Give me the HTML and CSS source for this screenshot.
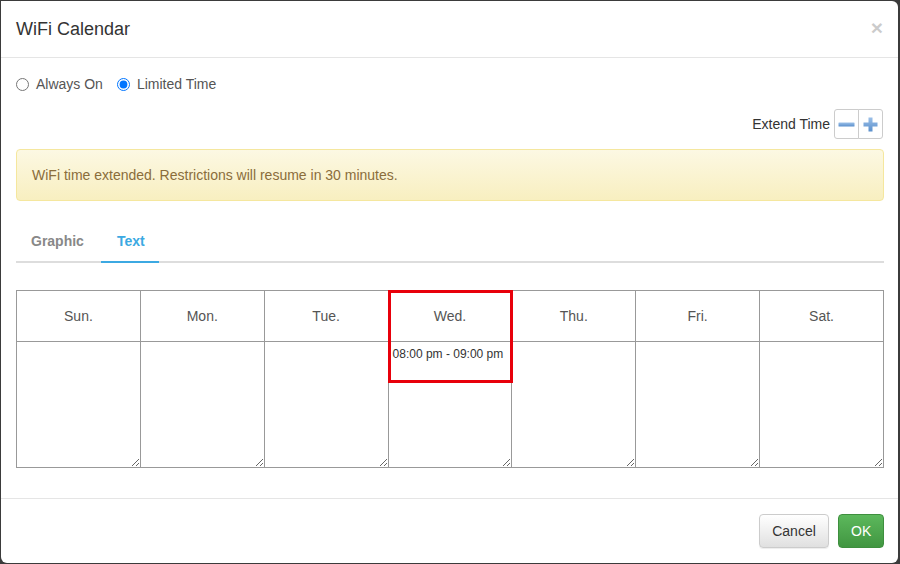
FILE: index.html
```html
<!DOCTYPE html>
<html>
<head>
<meta charset="utf-8">
<title>WiFi Calendar</title>
<link rel="stylesheet" href="styles.css">
</head>
<body>
<div class="modal">
  <div class="modal-header">
    <h4 class="modal-title">WiFi Calendar</h4>
    <span class="close">&times;</span>
  </div>
  <div class="modal-body">
    <div class="radio-row">
      <label class="radio"><input type="radio" name="mode"> Always On</label>
      <label class="radio"><input type="radio" name="mode" checked> Limited Time</label>
    </div>
    <div class="extend-row">
      <span class="extend-label">Extend Time</span>
      <div class="btn-group">
        <button class="btn-icon" type="button"><svg width="17" height="17" viewBox="0 0 17 17"><defs><linearGradient id="g1" x1="0" y1="0" x2="0" y2="1"><stop offset="0" stop-color="#9cc0e8"/><stop offset="1" stop-color="#5a8fcc"/></linearGradient></defs><rect x="0.5" y="6.5" width="16" height="4" rx="0.5" fill="url(#g1)"/></svg></button>
        <button class="btn-icon" type="button"><svg width="17" height="17" viewBox="0 0 17 17"><defs><linearGradient id="g2" x1="0" y1="0" x2="0" y2="1"><stop offset="0" stop-color="#9cc0e8"/><stop offset="1" stop-color="#5a8fcc"/></linearGradient></defs><path d="M6.5 1.5h4v5h5v4h-5v5h-4v-5h-5v-4h5z" fill="url(#g2)"/></svg></button>
      </div>
    </div>
    <div class="alert">WiFi time extended. Restrictions will resume in 30 minutes.</div>
    <ul class="tabs">
      <li class="tab">Graphic</li>
      <li class="tab active">Text</li>
    </ul>
    <div class="calendar-wrap">
      <table class="calendar">
        <thead>
          <tr><th>Sun.</th><th>Mon.</th><th>Tue.</th><th>Wed.</th><th>Thu.</th><th>Fri.</th><th>Sat.</th></tr>
        </thead>
        <tbody>
          <tr>
            <td><textarea></textarea></td>
            <td><textarea></textarea></td>
            <td><textarea></textarea></td>
            <td><textarea>08:00 pm - 09:00 pm</textarea></td>
            <td><textarea></textarea></td>
            <td><textarea></textarea></td>
            <td><textarea></textarea></td>
          </tr>
        </tbody>
      </table>
      <div class="highlight"></div>
    </div>
  </div>
  <div class="modal-footer">
    <button class="btn btn-default" type="button">Cancel</button>
    <button class="btn btn-success" type="button">OK</button>
  </div>
</div>
</body>
</html>
```

FILE: styles.css
```css
* { box-sizing: border-box; }
html, body { margin: 0; padding: 0; }
body {
  background: #3b3b3b;
  font-family: "Liberation Sans", Arial, sans-serif;
  font-size: 14px;
  line-height: 20px;
  color: #333;
  width: 900px;
  height: 564px;
  overflow: hidden;
}
.modal {
  margin: 1px 0 0 1px;
  width: 897px;
  height: 562px;
  background: #fff;
  border-radius: 0 6px 6px 6px;
  display: flex;
  flex-direction: column;
}
.modal-header {
  padding: 15px;
  border-bottom: 1px solid #e5e5e5;
  display: flex;
  justify-content: space-between;
  align-items: center;
  height: 57px;
}
.modal-title {
  margin: 0;
  font-size: 18px;
  font-weight: normal;
  line-height: 26px;
  color: #333;
}
.close {
  font-size: 21px;
  font-weight: bold;
  color: #000;
  opacity: 0.2;
  line-height: 1;
  margin-top: -4px;
  margin-right: 0;
}
.modal-body {
  padding: 16px 14px 0 15px;
  flex: 1;
}
.radio-row {
  display: flex;
  gap: 14px;
  height: 20px;
  align-items: center;
  color: #555;
}
.radio {
  display: flex;
  align-items: center;
}
.radio input {
  margin: 0 7px 0 0;
  width: 13px;
  height: 13px;
}
.extend-row {
  margin-top: 15px;
  margin-right: 1px;
  display: flex;
  justify-content: flex-end;
  align-items: center;
  height: 30px;
}
.extend-label {
  margin-right: 4px;
  color: #333;
}
.btn-group {
  display: flex;
}
.btn-icon {
  width: 25px;
  height: 30px;
  padding: 0;
  background: #fff;
  border: 1px solid #ccc;
  display: flex;
  align-items: center;
  justify-content: center;
}
.btn-icon:first-child { border-radius: 3px 0 0 3px; }
.btn-icon:last-child { border-radius: 0 3px 3px 0; margin-left: -1px; }
.alert {
  margin-top: 10px;
  padding: 15px;
  height: 52px;
  border: 1px solid #f5e79e;
  border-radius: 4px;
  background: linear-gradient(to bottom, #fcf8e3 0%, #f8efc0 100%);
  color: #8a6d3b;
  line-height: 20px;
}
.tabs {
  list-style: none;
  margin: 20px 0 0 0;
  padding: 0;
  display: flex;
  border-bottom: 2px solid #ddd;
  height: 42px;
}
.tab {
  padding: 10px 15px;
  font-weight: bold;
  color: #888;
  margin-bottom: -2px;
  border-bottom: 2px solid transparent;
}
.tab.active {
  color: #3ca9e2;
  border-bottom-color: #3ca9e2;
  margin-left: 2px;
  padding-left: 16px;
  padding-right: 14px;
}
.calendar-wrap {
  position: relative;
  margin-top: 27px;
}
.calendar {
  width: 868px;
  border-collapse: collapse;
  table-layout: fixed;
}
.calendar th, .calendar td {
  border: 1px solid #999;
  padding: 0;
}
.calendar th {
  height: 51px;
  font-weight: normal;
  color: #555;
  text-align: center;
  vertical-align: middle;
}
.calendar td {
  height: 126px;
  vertical-align: top;
}
.calendar textarea {
  display: block;
  width: 100%;
  height: 125px;
  border: none;
  outline: none;
  resize: vertical;
  padding: 5px 4px 4px;
  font-family: "Liberation Sans", Arial, sans-serif;
  font-size: 12px;
  line-height: 14px;
  color: #333;
  background: #fff;
}
.highlight {
  position: absolute;
  left: 372px;
  top: 0;
  width: 125px;
  height: 93px;
  border: 3px solid #e8000b;
  pointer-events: none;
}
.modal-footer {
  border-top: 1px solid #e5e5e5;
  padding: 15px 14px 15px 15px;
  display: flex;
  justify-content: flex-end;
  gap: 9px;
  height: 65px;
}
.btn {
  height: 34px;
  padding: 6px 12px;
  font-family: "Liberation Sans", Arial, sans-serif;
  font-size: 14px;
  line-height: 20px;
  border-radius: 4px;
  border: 1px solid #ccc;
}
.btn-default {
  background: linear-gradient(to bottom, #fff 0%, #e0e0e0 100%);
  color: #333;
  border-color: #ccc;
  width: 70px;
  box-shadow: inset 0 1px 0 rgba(255,255,255,.15), 0 1px 1px rgba(0,0,0,.075);
}
.btn-success {
  background: linear-gradient(to bottom, #5cb85c 0%, #419641 100%);
  color: #fff;
  border-color: #3e8f3e;
  width: 46px;
}
```
